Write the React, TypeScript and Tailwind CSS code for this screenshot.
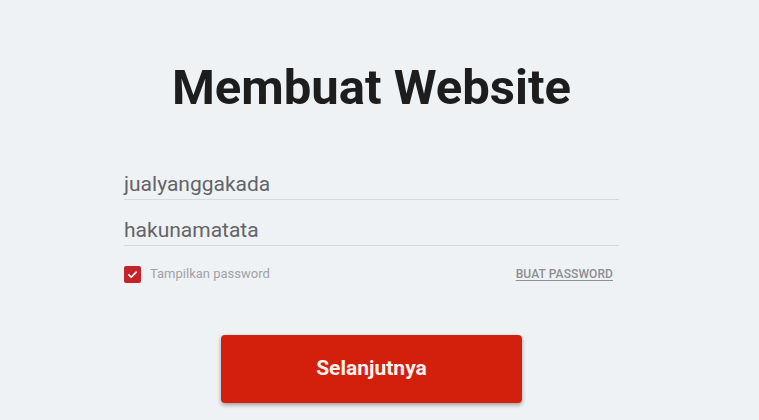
export default function App() {
  return (
    <main
      className="flex min-h-[420px] w-full justify-center bg-[#eff2f5] pr-[16px]"
      style={{ fontFamily: "Roboto, 'Liberation Sans', sans-serif" }}
    >
      <div className="flex w-[495px] flex-col">
        {/* Title */}
        <h1 className="pt-[60px] text-center text-[49px] font-bold leading-[56px] text-[#1d1d1d]">
          Membuat Website
        </h1>

        {/* Fields */}
        <div className="mt-[38px] flex h-[46px] items-end border-b border-[#d6dade] pb-[3px]">
          <span className="text-[21px] leading-[24px] text-[#626468]">jualyanggakada</span>
        </div>
        <div className="flex h-[46px] items-end border-b border-[#d6dade] pb-[3px]">
          <span className="text-[21px] leading-[24px] text-[#626468]">hakunamatata</span>
        </div>

        {/* Options */}
        <div className="mt-[19px] flex h-[18px] items-center justify-between pr-[6px]">
          <label className="flex items-center gap-[9px]">
            <span className="flex h-[17px] w-[17px] items-center justify-center rounded-[2px] bg-[#c5222a]">
              <svg width="11" height="11" viewBox="0 0 12 12" fill="none" aria-hidden="true">
                <path
                  d="M2 6.4l2.6 2.6L10 3.4"
                  stroke="white"
                  strokeWidth="1.8"
                  strokeLinecap="round"
                  strokeLinejoin="round"
                />
              </svg>
            </span>
            <span className="text-[13px] text-[#a0a2a5]">Tampilkan password</span>
          </label>
          <a href="#" className="text-[12px] font-medium tracking-[0.1px] text-[#8c8e91] underline underline-offset-2">
            BUAT PASSWORD
          </a>
        </div>

        {/* Submit */}
        <button className="mt-[52px] h-[68px] w-[301px] self-center rounded-[4px] bg-[#d3200d] text-[21px] font-bold text-[#fff2ee] shadow-[0_2px_4px_rgba(0,0,0,0.35)]">
          Selanjutnya
        </button>
      </div>
    </main>
  )
}
